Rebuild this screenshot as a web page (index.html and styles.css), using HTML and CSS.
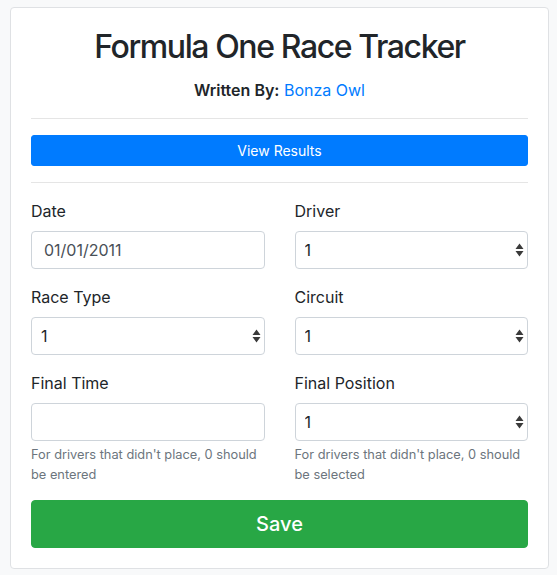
FILE: index.html
```html
<!DOCTYPE html>
<html>
<head>
<meta charset="utf-8">
<link rel="stylesheet" href="styles.css">
</head>
<body>
<div class="card">
  <h2 class="title">Formula One Race Tracker</h2>
  <p class="byline"><strong>Written By:</strong> <a href="#">Bonza Owl</a></p>
  <hr class="rule">
  <button class="btn btn-primary btn-sm">View Results</button>
  <hr class="rule">
  <form class="form">
    <div class="grid">
      <div class="group">
        <label class="label">Date</label>
        <input class="control" type="text" value="01/01/2011">
      </div>
      <div class="group">
        <label class="label">Driver</label>
        <div class="select-wrap">
          <select class="control select"><option>1</option></select>
          <svg class="arrows" width="9" height="14" viewBox="0 0 9 14"><path d="M4.5 0.5 L8.5 6 L0.5 6 Z M0.5 8 L8.5 8 L4.5 13.5 Z" fill="#3a3a3a"/></svg>
        </div>
      </div>
      <div class="group">
        <label class="label">Race Type</label>
        <div class="select-wrap">
          <select class="control select"><option>1</option></select>
          <svg class="arrows" width="9" height="14" viewBox="0 0 9 14"><path d="M4.5 0.5 L8.5 6 L0.5 6 Z M0.5 8 L8.5 8 L4.5 13.5 Z" fill="#3a3a3a"/></svg>
        </div>
      </div>
      <div class="group">
        <label class="label">Circuit</label>
        <div class="select-wrap">
          <select class="control select"><option>1</option></select>
          <svg class="arrows" width="9" height="14" viewBox="0 0 9 14"><path d="M4.5 0.5 L8.5 6 L0.5 6 Z M0.5 8 L8.5 8 L4.5 13.5 Z" fill="#3a3a3a"/></svg>
        </div>
      </div>
      <div class="group">
        <label class="label">Final Time</label>
        <input class="control" type="text" value="">
        <small class="help">For drivers that didn't place, 0 should be entered</small>
      </div>
      <div class="group">
        <label class="label">Final Position</label>
        <div class="select-wrap">
          <select class="control select"><option>1</option></select>
          <svg class="arrows" width="9" height="14" viewBox="0 0 9 14"><path d="M4.5 0.5 L8.5 6 L0.5 6 Z M0.5 8 L8.5 8 L4.5 13.5 Z" fill="#3a3a3a"/></svg>
        </div>
        <small class="help">For drivers that didn't place, 0 should be selected</small>
      </div>
    </div>
    <button type="button" class="btn btn-success btn-lg">Save</button>
  </form>
</div>
</body>
</html>
```

FILE: styles.css
```css
* { box-sizing: border-box; }

html, body {
  margin: 0;
  background: #f8f9fa;
}

body {
  padding: 7px 8px 0 10px;
  font-family: "Inter", "Liberation Sans", sans-serif;
  font-size: 16px;
  line-height: 1.5;
  color: #212529;
}

.card {
  width: 539px;
  background: #fff;
  border: 1px solid #dfe1e4;
  border-radius: 4px;
  padding: 20px;
}

.title {
  margin: 0 0 12px;
  text-align: center;
  font-size: 32px;
  font-weight: 500;
  line-height: 1.2;
  letter-spacing: -1.4px;
}

.byline {
  margin: 0;
  text-align: center;
}

.byline strong { font-weight: 600; }

.byline a {
  color: #007bff;
  text-decoration: none;
}

.rule {
  margin: 16px 0;
  border: 0;
  border-top: 1px solid rgba(0, 0, 0, 0.1);
}

.btn {
  display: block;
  width: 100%;
  border: 1px solid transparent;
  font-family: inherit;
  font-weight: 400;
  text-align: center;
  color: #fff;
}

.btn-sm {
  font-size: 14px;
  line-height: 1.5;
  padding: 4px 8px;
  border-radius: 3px;
}

.btn-lg {
  font-size: 20px;
  line-height: 1.5;
  padding: 8px 16px;
  border-radius: 4px;
  font-weight: 500;
}

.btn-primary { background: #007bff; border-color: #007bff; }
.btn-success { background: #28a745; border-color: #28a745; }

.grid {
  display: grid;
  grid-template-columns: 1fr 1fr;
  column-gap: 30px;
}

.group {
  margin-bottom: 16px;
  display: flex;
  flex-direction: column;
}

.label {
  display: block;
  margin-bottom: 8px;
}

.control {
  display: block;
  width: 100%;
  height: 38px;
  padding: 6px 12px;
  font-family: inherit;
  font-size: 16px;
  line-height: 1.5;
  color: #495057;
  background: #fff;
  border: 1px solid #ced4da;
  border-radius: 4px;
}

.select-wrap { position: relative; }

.select {
  appearance: none;
  -webkit-appearance: none;
  padding-left: 9px;
  color: #212529;
}

.arrows {
  position: absolute;
  right: 4px;
  top: 12px;
  pointer-events: none;
}

.help {
  display: block;
  margin-top: 4px;
  font-size: 12.8px;
  line-height: 1.5;
  color: #6c757d;
}
```
